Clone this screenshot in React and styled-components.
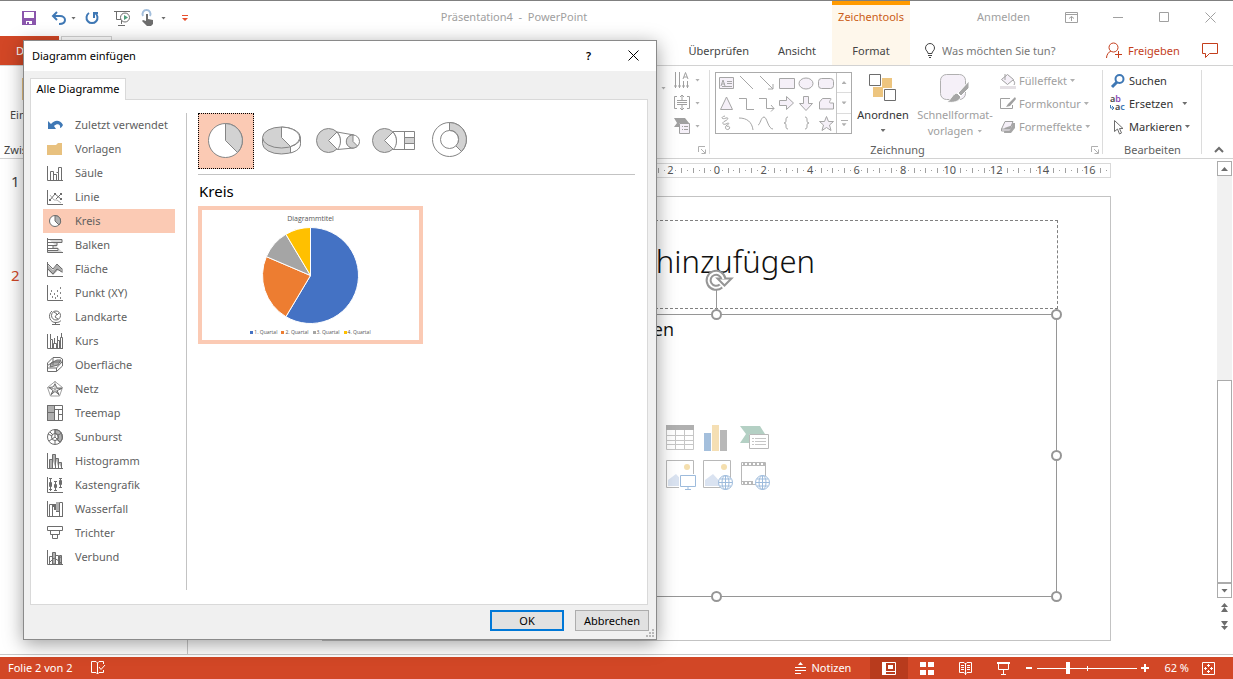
import React, { useState } from 'react'
import styled, { createGlobalStyle } from 'styled-components'

const GlobalStyle = createGlobalStyle`
    * { box-sizing: border-box; }
    body { margin: 0; background: #fff; }
    button, input { font: inherit; color: inherit; }
    button { padding: 0; border: 0; background: none; white-space: nowrap; }
`

const Page = styled.div`
    position: relative;
    display: flex;
    flex-direction: column;
    min-height: 100vh;
    overflow: hidden;
    border-top: 1px solid #808080;
    background: #fff;
    color: #444;
    font: 11px/16px 'Noto Sans', 'Open Sans', sans-serif;
`

const Icon = ({ w = 16, h = w, stroke = '#6d6d6d', fill = 'none', children }) => (
    <svg width={w} height={h} viewBox={`0 0 ${w} ${h}`} stroke={stroke} fill={fill} overflow="visible" aria-hidden="true">
        {children}
    </svg>
)

const Caret = styled.span`
    flex: none;
    width: ${(p) => (p.$big ? 7 : 5)}px;
    height: ${(p) => (p.$big ? 4 : 3)}px;
    background: ${(p) => p.color || '#6d6d6d'};
    clip-path: polygon(0 0, 100% 0, 50% 100%);
    transform: ${(p) => (p.$up ? 'scaleY(-1)' : 'none')};
`

/* ---------- title bar ---------- */

const TitleBar = styled.header`
    display: flex;
    height: 35px;
    color: #a0a0a0;
`

const QuickAccess = styled.div`
    display: flex;
    align-items: center;
    width: 196px;
    padding: 0 0 1px 22px;
    flex: none;
`

const QuickButton = styled.button`
    display: flex;
    align-items: center;
    gap: 5px;
    margin-right: ${(p) => p.$after}px;
`

const DocTitle = styled.div`
    flex: 1;
    text-align: center;
    line-height: 32px;
    white-space: pre;
`

const ContextTitle = styled.div`
    flex: none;
    width: 78px;
    border-top: 4px solid #ff9a00;
    background: #fef7eb;
    color: #cb5d16;
    line-height: 24px;
    text-align: center;
`

const WindowButtons = styled.div`
    display: flex;
    align-items: center;
    justify-content: flex-end;
    gap: 35px;
    flex: none;
    width: 323px;
    padding: 0 17px 3px 0;

    button { display: flex; }
`

/* ---------- tabs ---------- */

const TabBar = styled.nav`
    display: flex;
    height: 30px;
    border-bottom: 1px solid #d2d2d2;
    line-height: 28px;
`

const FileTab = styled.button`
    width: 59px;
    padding-left: 16px;
    background: #d24726;
    color: #fff;
    text-align: left;
`

const OpenTab = styled.button`
    width: 51px;
    margin-left: 2px;
    border: 1px solid #d2d2d2;
    border-bottom: 0;
`

const TabList = styled.div`
    display: flex;
    flex: 1;
    justify-content: flex-end;
    gap: 29px;
    padding-right: 16px;
`

const Tab = styled.button`
    color: #444;
`

const ContextTab = styled.button`
    width: 78px;
    background: #fef7eb;
    color: #444;
`

const TellMe = styled.label`
    display: flex;
    align-items: center;
    gap: 6px;
    width: 196px;
    padding-left: 14px;

    input {
        width: 130px;
        padding: 0;
        border: 0;
        outline: 0;
        background: none;
    }
    input::placeholder { color: #777; opacity: 1; }
`

const ShareArea = styled.div`
    display: flex;
    align-items: center;
    justify-content: space-between;
    width: 127px;
    padding-right: 14px;
    color: #c43e1c;
`

const ShareButton = styled.button`
    display: flex;
    align-items: center;
    gap: 6px;
`

/* ---------- ribbon ---------- */

const Ribbon = styled.section`
    display: flex;
    height: 93px;
    border-bottom: 1px solid #d2d2d2;
`

const Group = styled.div`
    position: relative;
    display: flex;
    flex-direction: column;
    flex: none;
    width: ${(p) => p.$width}px;
    padding-top: 3px;

    &::after {
        content: '';
        position: absolute;
        right: 0;
        top: 4px;
        bottom: 4px;
        border-right: 1px solid #dcdcdc;
    }
`

const GroupBody = styled.div`
    display: flex;
    flex: 1;
    gap: ${(p) => p.$gap || 0}px;
    padding-left: ${(p) => p.$left || 0}px;
`

const GroupFooter = styled.div`
    display: flex;
    align-items: center;
    height: 16px;
    color: #5f5f5f;

    span { flex: 1; text-align: center; }
    span:not(:last-child) { padding-right: 6px; }
    svg { margin-right: 4px; }
`

const Spring = styled.div`
    flex: 1;
`

const PasteGroup = styled.div`
    display: flex;
    flex-direction: column;
    width: 60px;
    padding: 12px 0 0 4px;

    svg { margin-left: 18px; }
    button { padding: 5px 0 19px 6px; text-align: left; }
`

const ToolStack = styled.div`
    display: flex;
    flex-direction: column;
    gap: 7px;
    padding-top: ${(p) => p.$top}px;
`

const IconTool = styled.button`
    display: flex;
    align-items: center;
    gap: 5px;
    height: 16px;
`

const Gallery = styled.div`
    display: flex;
    width: 137px;
    height: 62px;
    margin-top: 3px;
    border: 1px solid #ababab;
`

const ShapeGrid = styled.div`
    display: grid;
    grid-template-columns: repeat(6, 20px);
    grid-auto-rows: 20px;
    flex: 1;

    button { display: flex; }
`

const GalleryScroll = styled.div`
    display: flex;
    flex-direction: column;
    width: 15px;
    border-left: 1px solid #c6c6c6;

    button {
        display: flex;
        flex: 1;
        flex-direction: column;
        align-items: center;
        justify-content: center;
        gap: 2px;
    }
    button + button { border-top: 1px solid #dcdcdc; }
`

const BigButton = styled.button`
    display: flex;
    flex-direction: column;
    align-items: center;
    width: ${(p) => p.$width}px;
    padding-top: 5px;
    color: ${(p) => (p.$off ? '#a0a0a0' : '#333')};

    svg { margin-bottom: 5px; }
    > span + span { margin-top: 6px; }
`

const Line = styled.div`
    display: flex;
    align-items: center;
    gap: 4px;
`

const CommandList = styled.div`
    display: flex;
    flex-direction: column;
    align-items: flex-start;
    padding-left: 4px;
`

const Command = styled.button`
    display: flex;
    align-items: center;
    height: 23px;
    color: ${(p) => (p.$off ? '#a0a0a0' : '#333')};

    svg { margin-right: 3px; }
    ${Caret} { margin-left: ${(p) => p.$gap || 3}px; }
`

const RibbonEnd = styled.div`
    display: flex;
    align-items: flex-end;
    width: 31px;
    padding: 0 0 4px 12px;

    button { display: flex; }
`

/* ---------- workspace ---------- */

const Workspace = styled.main`
    display: flex;
    flex: 1;
    border-bottom: 1px solid #c8c8c8;
    margin-bottom: 2px;
`

const Thumbnails = styled.ol`
    width: 188px;
    margin: 0;
    padding: 12px 0 0 11px;
    border-right: 1px solid #c8c8c8;
    list-style: none;
    font-size: 15px;
    line-height: 20px;

    li { height: 94px; }
    li + li { color: #d24726; }
`

const Stage = styled.div`
    flex: 1;
    min-width: 0;
    padding: 4px 106px 13px 134px;
`

const RulerBar = styled.div`
    display: flex;
    justify-content: center;
    height: 15px;
    margin-bottom: 18px;
    overflow: hidden;
    border: 1px solid #d9d9d9;
    border-left: 0;

    svg { flex: none; }
`

const Slide = styled.article`
    position: relative;
    width: 100%;
    aspect-ratio: 789 / 445;
    border: 1px solid #c3c3c3;
    color: #111;
`

const TitleBox = styled.h1`
    position: absolute;
    top: 23px;
    left: 52px;
    right: 52px;
    height: 89px;
    margin: 0;
    padding-right: 242px;
    border: 1px dashed #808080;
    display: flex;
    justify-content: flex-end;
    font: 300 31px/80px 'Noto Sans', 'Open Sans', sans-serif;
    white-space: nowrap;
`

const BodyBox = styled.div`
    position: absolute;
    top: 117px;
    left: 52px;
    right: 53px;
    bottom: 43px;
    display: grid;
    border: 1px solid #969696;

    > * { grid-area: 1 / 1; }
`

const BodyText = styled.p`
    margin: 0;
    padding-right: 382px;
    text-align: right;
    font: 18px/28px 'Open Sans', sans-serif;
    white-space: nowrap;
`

const InsertGrid = styled.div`
    display: grid;
    grid-template-columns: repeat(3, 30px);
    grid-auto-rows: 30px;
    gap: 5px 7px;
    place-self: center;
    padding: 3px 0 0 3px;

    button { display: flex; }
`

const HandleLayer = styled.div`
    position: absolute;
    inset: -1px 0 0 -1px;
`

const Handle = styled.span`
    position: absolute;
    left: ${(p) => p.$x}%;
    top: ${(p) => p.$y}%;
    width: 11px;
    height: 11px;
    margin: -5px;
    border: 2px solid #969696;
    border-radius: 50%;
    background: #fff;
`

const RotateHandle = styled.span`
    position: absolute;
    left: calc(50% - 12px);
    top: -46px;
    display: flex;
`

const Scroll = styled.div`
    display: flex;
    flex-direction: column;
    align-items: center;
    width: 15px;
    margin: 2px 1px 24px 0;
`

const ScrollButton = styled.button`
    display: flex;
    align-items: center;
    justify-content: center;
    width: 15px;
    height: 15px;
    border: 1px solid #ababab;
`

const ScrollTrack = styled.div`
    display: flex;
    align-items: flex-end;
    flex: 1;
    width: 15px;
    background: #f1f1f1;
`

const ScrollThumb = styled.div`
    width: 15px;
    height: 50%;
    border: 1px solid #ababab;
    background: #fff;
`

const PageStep = styled.button`
    display: flex;
    margin-top: ${(p) => p.$before}px;
`

/* ---------- status bar ---------- */

const StatusBar = styled.footer`
    display: flex;
    align-items: center;
    height: 22px;
    padding: 0 18px 0 8px;
    background: #d24726;
    color: #fff;
`

const StatusButton = styled.button`
    display: flex;
    align-items: center;
    justify-content: center;
    gap: 5px;
    height: 22px;
    min-width: ${(p) => p.$width || 0}px;
    background: ${(p) => (p.$on ? '#b83b1d' : 'none')};
`

const ViewButtons = styled.div`
    display: flex;
    margin: 0 4px 0 19px;
`

const ZoomSlider = styled.input`
    appearance: none;
    width: 100px;
    height: 12px;
    margin: 0 4px;
    background:
        linear-gradient(#fff, #fff) 50px 50% / 1px 5px no-repeat,
        linear-gradient(#fff, #fff) 0 50% / 100% 1px no-repeat;

    &::-webkit-slider-thumb {
        appearance: none;
        width: 4px;
        height: 12px;
        background: #fff;
    }
`

const ZoomValue = styled.span`
    margin: 0 13px 0 15px;
`

/* ---------- dialog ---------- */

const Dialog = styled.section`
    position: absolute;
    left: 23px;
    top: 39px;
    width: 634px;
    border: 1px solid #8a8a8a;
    background: #f0f0f0;
    box-shadow: 0 4px 18px rgba(0, 0, 0, 0.38);
    color: #000;
`

const DialogTitle = styled.div`
    display: flex;
    align-items: center;
    height: 30px;
    padding: 0 17px 1px 8px;
    background: #fff;

    h2 { flex: 1; margin: 0; font: inherit; }
    button { display: flex; margin-left: 37px; font-weight: 600; }
`

const DialogTab = styled.button`
    display: block;
    position: relative;
    z-index: 1;
    width: 96px;
    height: 22px;
    margin: 7px 0 -1px 6px;
    padding-bottom: 2px;
    border: 1px solid #d9d9d9;
    border-bottom: 0;
    background: #fff;
`

const Panel = styled.div`
    display: flex;
    margin: 0 8px 0 6px;
    padding: 13px 12px 14px;
    border: 1px solid #d9d9d9;
    background: #fff;
`

const KindList = styled.ul`
    width: 144px;
    margin: 0;
    padding: 0 11px 21px 0;
    border-right: 1px solid #c3c3c3;
    list-style: none;
`

const Kind = styled.button`
    display: flex;
    align-items: center;
    gap: 12px;
    width: 132px;
    height: 24px;
    padding-left: 4px;
    background: ${(p) => (p.$on ? '#fbcab4' : 'none')};
    color: #5f5f5f;
`

const Detail = styled.div`
    flex: 1;
    padding-left: 11px;

    h3 {
        height: 31px;
        margin: 0;
        padding-left: 1px;
        color: #000;
        font-size: 15px;
        font-weight: 400;
        line-height: 33px;
    }
`

const SubTypes = styled.div`
    display: flex;
    padding-bottom: 5px;
    border-bottom: 1px solid #c3c3c3;
`

const SubType = styled.button`
    display: flex;
    align-items: center;
    justify-content: center;
    width: 56px;
    height: 56px;
    border: 1px dotted ${(p) => (p.$on ? '#000' : 'transparent')};
    background: ${(p) => (p.$on ? '#fbcab4' : 'none')};
`

const Preview = styled.figure`
    display: flex;
    flex-direction: column;
    align-items: center;
    width: 225px;
    height: 138px;
    margin: 0;
    padding-top: 4px;
    border: 4px solid #fbcab4;
    color: #555;
    font: 7px/9px 'Open Sans', sans-serif;

    svg { margin: 4px 0 3px; }
`

const Legend = styled.div`
    display: flex;
    gap: 4px;
    font-size: 5px;
    line-height: 8px;
`

const LegendItem = styled.span`
    display: flex;
    align-items: center;
    gap: 1px;

    &::before {
        content: '';
        width: 3px;
        height: 3px;
        background: ${(p) => p.color};
    }
`

const DialogButtons = styled.div`
    display: flex;
    justify-content: flex-end;
    align-items: flex-start;
    gap: 11px;
    height: 34px;
    padding: 5px 7px 0 0;
`

const DialogButton = styled.button`
    width: 74px;
    height: 21px;
    border: ${(p) => (p.$primary ? '2px solid #0078d7' : '1px solid #adadad')};
    background: #e1e1e1;
`

const Grip = styled.span`
    position: absolute;
    right: 2px;
    bottom: 2px;
    display: flex;
`

/* ---------- drawings ---------- */

const kinds = [
    ['Zuletzt verwendet', <g stroke="none" fill="#3f78b5"><path d="M1 4l3 3C7 3 13 2 16 8c-1 2-2 3-3 3 1-4-3-5-6-2l2 3H1z" /></g>],
    ['Vorlagen', <path d="M0 4h9l2-2h4v12H0z" fill="#e8c17f" stroke="none" />],
    ['Säule', <path d="M.5 1v14.500h15.500M3.500 15V6.500h3V15M6.500 9.500h3V15M9.500 7.500h2V15M11.500 7.500v-5h3V15" />],
    ['Linie', <><path d="M3 6l4 5h3l4 3" stroke="#b0b0b0" /><path d="M.5 1v14.500H16" /><path d="M3 11l5-6 6 5M9 10l5-5" /><path d="M2 11h2M7 5h2M13 10h2M13 5h2" strokeWidth="2" /></>],
    ['Kreis', <><circle cx="8" cy="8" r="5.500" fill="#fff" /><path d="M8 2.500V8l4 4a5.500 5.500 0 0 0-4-9.500z" fill="#b0b0b0" /></>],
    ['Balken', <path d="M.5 1v14.500H16M1 2.500h14v3H1M1 5.500h9v3H1M1 8.500h5v3H1M1 11.500h10v2H1" fill="#d8d8d8" />],
    ['Fläche', <><path d="M1 4l5 5 4-6 6 5v4l-5-3-5 5-5-5z" fill="#b0b0b0" stroke="none" /><path d="M.5 1v14.500H16M1 8l5 5 4-5 5 3M1 3l5 5 4-5 5 5" /></>],
    ['Punkt (XY)', <><path d="M.5 0v15.500H16" /><path d="M4 6h1M7 9h1M10 6h1M13 3h1M5 12h1M10 11h1M13 13h1M8 13h1M3 9h1M13 8h1" strokeWidth="2" stroke="#858585" /></>],
    ['Landkarte', <><circle cx="9" cy="6.500" r="4.500" /><path d="M5 2C0 6 3 14 9 13.500c3 0 4-1 5-2M8.500 13v2M5 15.500h8M7 3l3 2-2 3 3 2M12 4l-2 2" /></>],
    ['Kurs', <path d="M.5 1v14.500H16M3.500 1v5M3.500 15V6.500h2V15M7.500 5v5M6.500 15v-4.500h3V15M10.500 3v5M10.500 15V7.500h2V15M14.500 0v4M13.500 15V4.500h2V15" />],
    ['Oberfläche', <><path d="M4 6l6-3h4l-3 5-8 2z" fill="#b0b0b0" /><path d="M.5 8.500v6h9l6-5.500V2L13 .5H6L.5 6zM.5 8.500L6 5h9.500M9.500 14.500V11L15 5M.5 11h9M6 1v7" /></>],
    ['Netz', <><path d="M8 .5l7.500 6-3 8.500h-9L.5 6.500zM8 8V0M8 8l7.500-1.500M8 8l4.500 7M8 8l-4.500 7M8 8L.5 6.500" stroke="#a0a0a0" /><path d="M8 3l2 4 5 .5-5 2 2 4-4-3-4 3 2-4-4-3 4-.500z" /></>],
    ['Treemap', <><path d="M.5.5h7v7h-7zM.5 7.500h7v8h-7z" fill="#b0b0b0" /><path d="M.5.5h15v15H.5zM7.500.5v15M7.500 4.500h8M11.500 4.500v11M11.500 9.500h4" /></>],
    ['Sunburst', <><path d="M8 .5a7.500 7.500 0 0 1 5 13L10 10.500a3.500 3.500 0 0 0-2-6z" fill="#b0b0b0" /><circle cx="8" cy="8" r="7.500" /><circle cx="8" cy="8" r="3.500" /><path d="M8 0v8l5 5M8 8l-6 4M5 7L1 5M3 3l3 3M8 11v4M11 6l4-2" /></>],
    ['Histogramm', <><path d="M2.500 15V6.500h3V15M5.500 6.500v-5h3V15M8.500 5.500h3V15M11.500 9.500h3V15" fill="#b0b0b0" /><path d="M5.500 2v13M.5 0v15.500H16" /></>],
    ['Kastengrafik', <path d="M.5 0v15.500H16M3.500 1v13M2.500 5.500h2v4h-2zM8.500 4v10M7.500 7.500h2v3h-2zM13.500 1v10M12.500 3.500h2v4h-2zM2 1.500h3M2 12.500h3M7 4.500h3M7 13.500h3M12 1.500h3M12 10.500h3" />],
    ['Wasserfall', <><path d="M9 1h3v9H9z" fill="#b0b0b0" stroke="none" /><path d="M5 3h4v6H7V6H5z" fill="#6d6d6d" stroke="none" /><path d="M.5 0v15.500H16M2.500 15V3.500h3V15M12.500 15V1.500h3V15M9 10.500h3" /></>],
    ['Trichter', <path d="M.5 1.500h15v4H.5zM3.500 5.500h9v4h-9zM5.500 9.500h5v4h-5z" />],
    ['Verbund', <><path d="M5.500 3.500h3V15h-3zM12.500 6.500h2V15h-2z" fill="#b0b0b0" /><path d="M.5 1v14.500H16M2.500 15V7.500h3M8.500 6.500h3V15M11.500 9.500l3-2M3 13l4-4 5 3 3 3" /></>],
]

const subTypes = [
    <Icon w={36} stroke="#858585"><circle cx="17.500" cy="17.500" r="17" fill="#fff" /><path d="M17.500.5v17l12 12a17 17 0 0 0-12-29z" fill="#d2d2d2" /></Icon>,
    <Icon w={40} h={36} stroke="#858585">
        <path d="M.5 14.500v6a19 10.500 0 0 0 38 0v-6" fill="#d2d2d2" />
        <path d="M28.500 23.500v6.500c7-2 10-5 10-9.500v-6z" fill="#fff" />
        <ellipse cx="19.500" cy="14.500" rx="19" ry="10.500" fill="#d2d2d2" />
        <path d="M19.500 4v10.500l9 9A19 10.500 0 0 0 19.500 4z" fill="#fff" />
    </Icon>,
    <Icon w={44} h={26} stroke="#858585">
        <circle cx="12.500" cy="12.500" r="12" fill="#d2d2d2" />
        <path d="M21 4L12.500 12.500l9 9c4-5 4-12-.5-17.500z" fill="#fff" />
        <path d="M21 4l17 3M21.500 21.500l16-1.500" />
        <circle cx="37" cy="13.500" r="6.500" fill="#fff" />
        <path d="M37 7v6.500l4.500 4.500A6.500 6.500 0 1 1 37 7z" fill="#d2d2d2" />
    </Icon>,
    <Icon w={44} h={26} stroke="#858585">
        <circle cx="12.500" cy="12.500" r="12" fill="#d2d2d2" />
        <path d="M21 4L12.500 12.500l9 9c4-5 4-12-.5-17.500z" fill="#fff" />
        <path d="M21 3.500h21.500v18H21M32.500 3.500v18" />
        <path d="M32.500 9.500h10v6h-10z" fill="#d2d2d2" />
    </Icon>,
    <Icon w={36} stroke="#858585">
        <circle cx="17.500" cy="16.500" r="17" />
        <path d="M17.500-.5a17 17 0 0 1 12 29l-6-6a8.500 8.500 0 0 0-6-15z" fill="#d2d2d2" />
        <circle cx="17.500" cy="16.500" r="9" fill="#fff" />
    </Icon>,
]

const shapes = [
    ['Textfeld', <><path d="M3.500 4.500h14v11h-14z" /><path d="M5 13l2-6 2 6M6 11h3M11 8.500h5M11 10.500h5M6 13.500h10" /></>],
    ['Linie', <path d="M4 3l13 13" />],
    ['Pfeil', <path d="M4 3l13 13M17 11v5h-5" fill="none" />],
    ['Rechteck', <path d="M3.500 5.500h15v10h-15z" />],
    ['Ellipse', <ellipse cx="10" cy="10.500" rx="7" ry="5.500" />],
    ['Abgerundetes Rechteck', <rect x="2.500" y="5.500" width="15" height="10" rx="3" />],
    ['Dreieck', <path d="M10.500 4l6 12.500h-12z" />],
    ['Winkel', <path d="M3 5.500h7.500v11H18" fill="none" />],
    ['Winkelpfeil', <path d="M3 5.500h7.500v10H18M15 12l3 3.500-3 3" fill="none" />],
    ['Pfeil rechts', <path d="M3.500 7.500h7v-4l7 6.500-7 6.500v-4h-7z" />],
    ['Pfeil unten', <path d="M7.500 3.500h5v7h4l-6.500 7-6.500-7h4z" />],
    ['Freihandform', <path d="M6.500 5.500h8c2 0-3 4 0 4.500h3v6h-14V9z" />],
    ['Skizze', <path d="M9 3C4 4 6 7 10 5c3-1 2 2-1 3-4 2-2 4 1 3 3-2 4 0 1 1-3 2-1 6 2 4 2-2-1-4-2-2" fill="none" />],
    ['Bogen', <path d="M3 5c8 0 13 4 14 12" fill="none" />],
    ['Kurve', <path d="M2 12c2 0 3-8 6-8s4 12 9 12" fill="none" />],
    ['Klammer auf', <path d="M12 4c-4 0 0 6-4 6 4 0 0 6 4 6" fill="none" />],
    ['Klammer zu', <path d="M9 4c4 0 0 6 4 6-4 0 0 6-4 6" fill="none" />],
    ['Stern', <path d="M10.500 3.500l2 5h5l-4 3.500 1.500 5.500-4.500-3-4.500 3 1.500-5.500-4-3.500h5z" />],
]

const quarters = [
    { label: '1. Quartal', value: 8.2, color: '#4472c4' },
    { label: '2. Quartal', value: 3.2, color: '#ed7d31' },
    { label: '3. Quartal', value: 1.4, color: '#a5a5a5' },
    { label: '4. Quartal', value: 1.2, color: '#ffc000' },
]

const Pie = () => {
    const total = quarters.reduce((sum, q) => sum + q.value, 0)
    const point = (v) => {
        const a = (v / total) * 2 * Math.PI
        return `${48.5 + 48 * Math.sin(a)} ${48.5 - 48 * Math.cos(a)}`
    }
    let start = 0
    return (
        <Icon w={97} h={98} stroke="#fff">
            {quarters.map((q) => {
                const end = start + q.value
                const d = `M48.5 48.5L${point(start)}A48 48 0 ${q.value > total / 2 ? 1 : 0} 1 ${point(end)}z`
                start = end
                return <path key={q.label} d={d} fill={q.color} />
            })}
        </Icon>
    )
}

const CM = 788 / 33.867

const Ruler = () => {
    const marks = []
    for (let k = -67; k <= 67; k++) {
        const x = 395 + (k * CM) / 4
        if (k % 8 === 0) {
            marks.push(<text key={k} x={x} y="10" textAnchor="middle" fontSize="11" fill="#555">{Math.abs(k / 4)}</text>)
        } else {
            const r = k % 2 ? 0.5 : 2.5
            marks.push(<path key={k} d={`M${Math.round(x) - 0.5} ${6.500 - r}v${r * 2}`} stroke="#a0a0a0" />)
        }
    }
    return <svg width="789" height="13" aria-hidden="true">{marks}</svg>
}

const Globe = () => (
    <g stroke="#9dbbdc" fill="#fff">
        <circle cx="22.500" cy="22.500" r="7" />
        <ellipse cx="22.500" cy="22.500" rx="3.500" ry="7" />
        <path d="M22.500 15.500v14M15.500 22.500h14M17 19h11M17 26h11" />
    </g>
)

const Picture = () => (
    <>
        <path d="M.5.5h27v27H.5z" fill="#fff" />
        <path d="M2 26v-6l8-6 11 12z" fill="#dae3f1" stroke="none" />
        <circle cx="21" cy="7" r="3" fill="#f5dfae" stroke="none" />
    </>
)

const inserts = [
    ['Tabelle', <><path d="M.5.5h27v24H.5zM.5 10.500h27M.5 15.500h27M.5 19.500h27M9.500 5v19M18.500 5v19" stroke="#c6c6c6" /><path d="M0 0h28v5H0z" fill="#b0b0b0" stroke="none" /></>],
    ['Diagramm', <g stroke="none"><path d="M1 8h7v18H1z" fill="#a4bfdc" /><path d="M9 0h7v26H9z" fill="#f5dfb4" /><path d="M17 5h7v21h-7z" fill="#b8b8b8" /></g>],
    ['SmartArt', <><path d="M0 1h20l5 8h-16v9H0l6-9z" fill="#b4d0c4" stroke="none" /><path d="M9.500 9.500h19v14h-19z" fill="#fff" /><path d="M12 13.500h2M15 13.500h11M12 16.500h2M15 16.500h11M12 19.500h2M15 19.500h11" stroke="#c6c6c6" /></>],
    ['Bild', <><Picture /><path d="M13 14h17v16H13z" fill="#fff" stroke="none" /><path d="M14.500 15.500h15v11h-15zM22 27v2M19 29.500h6" stroke="#9dbbdc" /></>],
    ['Onlinebild', <><Picture /><Globe /></>],
    ['Video', <><path d="M1.500 2.500h24v22h-24zM1 5.500h24M1 21.500h12" /><path d="M3 4h22M3 23h12" strokeDasharray="2 2" strokeWidth="2" /><Globe /></>],
]

const Launcher = () => (
    <Icon w={8} stroke="#b0b0b0"><path d="M.5 6V.5H7M3 3l4 4M7.500 3.500v4h-4" /></Icon>
)

const ChartDialog = () => {
    const [kind, setKind] = useState('Kreis')
    const [sub, setSub] = useState(0)

    return (
        <Dialog role="dialog" aria-label="Diagramm einfügen">
            <DialogTitle>
                <h2>Diagramm einfügen</h2>
                <button type="button">?</button>
                <button type="button" aria-label="Schließen">
                    <Icon w={11} stroke="#000"><path d="M.5.5l10 10M10.500.5l-10 10" /></Icon>
                </button>
            </DialogTitle>
            <DialogTab type="button">Alle Diagramme</DialogTab>
            <Panel>
                <KindList>
                    {kinds.map(([name, art]) => (
                        <li key={name}>
                            <Kind type="button" $on={name === kind} onClick={() => setKind(name)}>
                                <Icon>{art}</Icon>
                                {name}
                            </Kind>
                        </li>
                    ))}
                </KindList>
                <Detail>
                    <SubTypes>
                        {subTypes.map((art, i) => (
                            <SubType key={i} type="button" aria-label={`Untertyp ${i + 1}`} $on={i === sub} onClick={() => setSub(i)}>
                                {art}
                            </SubType>
                        ))}
                    </SubTypes>
                    <h3>{kind}</h3>
                    <Preview>
                        <span>Diagrammtitel</span>
                        <Pie />
                        <Legend>
                            {quarters.map((q) => (
                                <LegendItem key={q.label} color={q.color}>{q.label}</LegendItem>
                            ))}
                        </Legend>
                    </Preview>
                </Detail>
            </Panel>
            <DialogButtons>
                <DialogButton type="button" $primary>OK</DialogButton>
                <DialogButton type="button">Abbrechen</DialogButton>
            </DialogButtons>
            <Grip>
                <Icon w={8} fill="#b8b8b8" stroke="none">
                    <path d="M6 0h2v2H6zM3 3h2v2H3zM6 3h2v2H6zM0 6h2v2H0zM3 6h2v2H3zM6 6h2v2H6z" />
                </Icon>
            </Grip>
        </Dialog>
    )
}

const Header = () => (
    <>
        <TitleBar>
            <QuickAccess>
                <QuickButton $after={15} aria-label="Speichern">
                    <Icon w={14} stroke="none" fill="#8a56ac"><path d="M0 0h14v14H0z" /><path d="M2 1h10v6H2zM4 10h6v3H4z" fill="#fff" /><path d="M5 11h2v3H5z" /></Icon>
                </QuickButton>
                <QuickButton $after={9} aria-label="Rückgängig">
                    <Icon w={15} stroke="#3f78b5"><path d="M2 5h7c3 0 5 2 5 4s-2 4-6 4M6 1L2 5l4 4" strokeWidth="2" /></Icon>
                    <Caret />
                </QuickButton>
                <QuickButton $after={15} aria-label="Wiederholen">
                    <Icon w={14} stroke="#3f78b5"><path d="M4 2a5.500 5.500 0 1 0 6 0M9 7V2h4" strokeWidth="2" /></Icon>
                </QuickButton>
                <QuickButton $after={10} aria-label="Präsentation starten">
                    <Icon w={17}><path d="M0 1.500h16M2.500 2v7.500h5M7.500 10v4M4 15.500h7" /><circle cx="11" cy="7.500" r="4.500" fill="#fff" /><path d="M10 5l4 2.500-4 2.500z" fill="#4f9d7b" stroke="none" /></Icon>
                </QuickButton>
                <QuickButton $after={16} aria-label="Touchmodus">
                    <Icon w={15} h={16}><path d="M2 6a4 4 0 1 1 7 0" stroke="#a4bfdc" strokeWidth="2" /><path d="M5 4h2v5l5 1v4l-2 2H6l-5-5 1-1 3 1z" fill="#6d6d6d" stroke="none" /></Icon>
                    <Caret />
                </QuickButton>
                <QuickButton $after={0} aria-label="Anpassen">
                    <Icon w={6} h={7} fill="#e8502d" stroke="none"><path d="M0 0h6v1H0zM0 3h6L3 6z" /></Icon>
                </QuickButton>
            </QuickAccess>
            <DocTitle>{'Präsentation4  -  PowerPoint'}</DocTitle>
            <ContextTitle>Zeichentools</ContextTitle>
            <WindowButtons>
                <button>Anmelden</button>
                <button aria-label="Menübandoptionen"><Icon w={13} h={11} stroke="#a0a0a0"><path d="M.5.5h12v10H.5zM.5 2.500h12M6.500 9V4.500M4 6.500l2.500-2 2.500 2" /></Icon></button>
                <button aria-label="Minimieren"><Icon w={11} stroke="#a0a0a0"><path d="M0 5.500h10" /></Icon></button>
                <button aria-label="Maximieren"><Icon w={11} stroke="#a0a0a0"><path d="M.5.5h9v9h-9z" /></Icon></button>
                <button aria-label="Schließen"><Icon w={11} stroke="#a0a0a0"><path d="M.5.5l10 10M10.500.5l-10 10" /></Icon></button>
            </WindowButtons>
        </TitleBar>
        <TabBar>
            <FileTab>Datei</FileTab>
            <OpenTab aria-label="Start" />
            <TabList>
                <Tab>Überprüfen</Tab>
                <Tab>Ansicht</Tab>
            </TabList>
            <ContextTab>Format</ContextTab>
            <TellMe>
                <Icon w={12} h={15} stroke="#444"><path d="M4 10.500C4 8 1.500 8 1.500 5a4.500 4.500 0 0 1 9 0C10.500 8 8 8 8 10.500zM4 12.500h4M5 14.500h2" /></Icon>
                <input type="text" aria-label="Was möchten Sie tun?" placeholder="Was möchten Sie tun?" />
            </TellMe>
            <ShareArea>
                <ShareButton>
                    <Icon w={16} h={17} stroke="#c43e1c"><circle cx="7.500" cy="5.500" r="4.500" /><path d="M.5 16c0-3 2-6 4.500-7M12.500 9v7M9 12.500h7" /></Icon>
                    Freigeben
                </ShareButton>
                <ShareButton aria-label="Kommentare">
                    <Icon w={17} h={15} stroke="#c43e1c"><path d="M.5.5h15v10h-8l-4 4v-4h-3z" /></Icon>
                </ShareButton>
            </ShareArea>
        </TabBar>
    </>
)

const RibbonBar = () => (
    <Ribbon>
        <PasteGroup>
            <Icon w={20} h={24} fill="#e8c17f" stroke="none"><path d="M0 0h20v22H0z" /></Icon>
            <button>Einfügen</button>
            <span>Zwischenablage</span>
        </PasteGroup>
        <Spring />
        <Group $width={54}>
            <GroupBody $left={5} $gap={8}>
                <ToolStack $top={11}>
                    <IconTool aria-label="Spalten"><Caret color="#b0b0b0" /></IconTool>
                </ToolStack>
                <ToolStack $top={3}>
                    <IconTool aria-label="Textrichtung">
                        <Icon stroke="#a0a0a0"><path d="M1.500 0v16M5.500 0v16M9.500 9v7M13.500 9v7M9 7l2.500-6.500L14 7M10 5h3M0 14h3M4 14h3M8 14h3M12 14h3" /></Icon>
                        <Caret color="#b0b0b0" />
                    </IconTool>
                    <IconTool aria-label="Text ausrichten">
                        <Icon stroke="#a0a0a0"><path d="M3 1.500H.5v12H3M13 1.500h2.500v12H13M3 5.500h10M3 7.500h10M3 9.500h10M8 0v5M6 2l2-2 2 2M8 10v5M6 13l2 2 2-2" /></Icon>
                        <Caret color="#b0b0b0" />
                    </IconTool>
                    <IconTool aria-label="SmartArt">
                        <Icon stroke="#a0a0a0"><path d="M0 0h11l4 5H5v4H0l3-4z" fill="#a0a0a0" stroke="none" /><path d="M5.500 5.500h10v10h-10zM8 8.500h1M10 8.500h4M8 11.500h1M10 11.500h4" fill="#f5f0f8" /></Icon>
                        <Caret color="#b0b0b0" />
                    </IconTool>
                </ToolStack>
            </GroupBody>
            <GroupFooter><Spring /><Launcher /></GroupFooter>
        </Group>
        <Group $width={393}>
            <GroupBody $left={5}>
                <Gallery>
                    <ShapeGrid>
                        {shapes.map(([name, art]) => (
                            <button key={name} aria-label={name}>
                                <Icon w={20} stroke="#a6a6a6" fill="#f5f0f8">{art}</Icon>
                            </button>
                        ))}
                    </ShapeGrid>
                    <GalleryScroll>
                        <button aria-label="Nach oben"><Caret $up color="#b0b0b0" /></button>
                        <button aria-label="Nach unten"><Caret color="#b0b0b0" /></button>
                        <button aria-label="Weitere"><Icon w={7} h={1} stroke="#b0b0b0"><path d="M0 .5h7" /></Icon><Caret color="#b0b0b0" /></button>
                    </GalleryScroll>
                </Gallery>
                <BigButton $width={62}>
                    <Icon w={28} h={28} stroke="#6d6d6d"><path d="M13 4h10v10H13zM4 13h10v10H4z" fill="#edc57f" stroke="none" /><path d="M.5.5h11v11H.5zM15.500 15.500h11v11h-11z" fill="#fff" /></Icon>
                    <span>Anordnen</span>
                    <Caret />
                </BigButton>
                <BigButton $width={82} $off>
                    <Icon w={30} h={28} stroke="#b0b0b0"><rect x=".5" y=".5" width="25" height="25" rx="6" fill="#f5f0f8" /><path d="M29 7v7l-8 8-3-3zM17 19l4 4c-2 5-8 6-14 5 4-2 5-8 10-9z" fill="#a6a6a6" stroke="#fff" /></Icon>
                    <Line>Schnellformat-</Line>
                    <Line>vorlagen <Caret color="#b0b0b0" /></Line>
                </BigButton>
                <CommandList>
                    <Command $off>
                        <Icon stroke="#a0a0a0"><path d="M1.500 6.500l6-5 6 5-6 5zM5 7V1M13 7c2 2 2 3 1 5" fill="#f5f0f8" /><path d="M0 13h16v3H0z" fill="#e4e0e4" stroke="none" /></Icon>
                        Fülleffekt <Caret color="#b0b0b0" />
                    </Command>
                    <Command $off>
                        <Icon stroke="#a0a0a0"><path d="M10 2.500H.5v10h12V9" /><path d="M15 1l-7 7-2 3 4-1 6-7z" fill="#a0a0a0" stroke="none" /></Icon>
                        Formkontur <Caret color="#b0b0b0" />
                    </Command>
                    <Command $off>
                        <Icon stroke="#a0a0a0"><path d="M5 4h10v5l-4 5H4z" fill="#a6a6a6" stroke="none" /><path d="M5 2.500h8l-3 7.500H1.500zM1.500 10v2H10l3-6" fill="#f5f0f8" /></Icon>
                        Formeffekte <Caret color="#b0b0b0" />
                    </Command>
                </CommandList>
            </GroupBody>
            <GroupFooter><span>Zeichnung</span><Launcher /></GroupFooter>
        </Group>
        <Group $width={99}>
            <GroupBody $left={3}>
                <CommandList>
                    <Command>
                        <Icon stroke="#3f78b5"><circle cx="9.500" cy="6" r="4" strokeWidth="2" /><path d="M7 9l-5 5" strokeWidth="3" /></Icon>
                        Suchen
                    </Command>
                    <Command $gap={9}>
                        <Icon stroke="none" fill="#444" >
                            <text x="0" y="6" fontSize="9" fontWeight="600">a<tspan fill="#8a4bb5">b</tspan></text>
                            <text x="5" y="14" fontSize="9" fontWeight="600">a<tspan fill="#3f78b5">c</tspan></text>
                            <path d="M.5 9v3H4M2 10l2 2-2 2" stroke="#3f78b5" fill="none" />
                        </Icon>
                        Ersetzen <Caret />
                    </Command>
                    <Command>
                        <Icon stroke="#6d6d6d"><path d="M4.500 1.500v11l3-2.500 2 5 2-1-2-4.500h3.500z" fill="#fff" /></Icon>
                        Markieren <Caret />
                    </Command>
                </CommandList>
            </GroupBody>
            <GroupFooter><span>Bearbeiten</span></GroupFooter>
        </Group>
        <RibbonEnd>
            <button aria-label="Menüband reduzieren"><Icon w={10} h={8}><path d="M1 6l4-4 4 4" strokeWidth="2" /></Icon></button>
        </RibbonEnd>
    </Ribbon>
)

const Editor = () => (
    <Workspace>
        <Thumbnails>
            <li>1</li>
            <li>2</li>
        </Thumbnails>
        <Stage>
            <RulerBar><Ruler /></RulerBar>
            <Slide>
                <TitleBox>Titel durch Klicken hinzufügen</TitleBox>
                <BodyBox>
                    <BodyText>Text durch Klicken hinzufügen</BodyText>
                    <InsertGrid>
                        {inserts.map(([name, art]) => (
                            <button key={name} aria-label={name}>
                                <Icon w={30} stroke="#b8b8b8">{art}</Icon>
                            </button>
                        ))}
                    </InsertGrid>
                    <HandleLayer>
                        <RotateHandle>
                            <Icon w={28} h={46} stroke="#969696">
                                <path d="M12.500 22v20" />
                                <path d="M17 18a7.500 7.500 0 1 1 2.500-7" strokeWidth="6" />
                                <path d="M13.500 10.500h14l-7 7z" fill="#fff" strokeWidth="2" />
                                <path d="M17 18a7.500 7.500 0 1 1 2.500-7" stroke="#fff" strokeWidth="2" />
                            </Icon>
                        </RotateHandle>
                        <Handle $x={50} $y={0} />
                        <Handle $x={100} $y={0} />
                        <Handle $x={100} $y={50} />
                        <Handle $x={100} $y={100} />
                        <Handle $x={50} $y={100} />
                    </HandleLayer>
                </BodyBox>
            </Slide>
        </Stage>
        <Scroll>
            <ScrollButton aria-label="Nach oben"><Caret $big $up /></ScrollButton>
            <ScrollTrack><ScrollThumb /></ScrollTrack>
            <ScrollButton aria-label="Nach unten"><Caret $big /></ScrollButton>
            <PageStep $before={5} aria-label="Vorherige Folie">
                <Icon w={7} h={9} fill="#6d6d6d" stroke="none"><path d="M3.500 0L7 4H0zM3.500 4L7 9H0z" /></Icon>
            </PageStep>
            <PageStep $before={9} aria-label="Nächste Folie">
                <Icon w={7} h={9} fill="#6d6d6d" stroke="none"><path d="M3.500 9L7 5H0zM3.500 5L7 0H0z" /></Icon>
            </PageStep>
        </Scroll>
    </Workspace>
)

const Status = () => {
    const [zoom, setZoom] = useState(30)

    return (
        <StatusBar>
            <span>Folie 2 von 2</span>
            <Spring>
                <StatusButton $width={52} aria-label="Rechtschreibung">
                    <Icon w={15} h={14} stroke="#fff"><path d="M6.500 2L5 .5H.5v11H5l1.500 1.500L8 11.500h4.500V9M6.500 2v11M6.500 2L8 .5h4.500V3M8 6l2 2.500L14 4" /></Icon>
                </StatusButton>
            </Spring>
            <StatusButton>
                <Icon w={11} h={12} stroke="#fff"><path d="M0 5.500h11M0 8.500h11M0 11.500h6" /><path d="M5.500 0L8 3H3z" fill="#fff" stroke="none" /></Icon>
                Notizen
            </StatusButton>
            <ViewButtons>
                <StatusButton $width={38} $on aria-label="Normal">
                    <Icon w={14} h={13} stroke="#fff"><path d="M.5.5h13v12H.5zM4 9.500h9" /><path d="M0 0h4v13H0zM6 3h5v4H6z" fill="#fff" stroke="none" /></Icon>
                </StatusButton>
                <StatusButton $width={38} aria-label="Foliensortierung">
                    <Icon w={14} h={13} fill="#fff" stroke="none"><path d="M0 0h6v5H0zM8 0h6v5H8zM0 8h6v5H0zM8 8h6v5H8z" /></Icon>
                </StatusButton>
                <StatusButton $width={38} aria-label="Leseansicht">
                    <Icon w={13} h={13} stroke="#fff"><path d="M6.500 2L5 .5H.5v10H5L6.500 12 8 10.500h4.500V.5H8zM6.500 1v12M2 3.500h3M2 5.500h3M2 7.500h3M8 3.500h3M8 5.500h3M8 7.500h3" /></Icon>
                </StatusButton>
                <StatusButton $width={38} aria-label="Bildschirmpräsentation">
                    <Icon w={13} h={13} stroke="#fff"><path d="M0 1h13" strokeWidth="2" /><path d="M1.500 2v5.500h10V2M6.500 8v4M4 12.500h5" /></Icon>
                </StatusButton>
            </ViewButtons>
            <StatusButton aria-label="Verkleinern"><Icon w={7} h={9} stroke="#fff"><path d="M0 4h6" strokeWidth="2" /></Icon></StatusButton>
            <ZoomSlider type="range" aria-label="Zoom" value={zoom} onChange={(e) => setZoom(e.target.value)} />
            <StatusButton aria-label="Vergrößern"><Icon w={8} stroke="#fff"><path d="M0 4h8M4 0v8" strokeWidth="2" /></Icon></StatusButton>
            <ZoomValue>62 %</ZoomValue>
            <StatusButton aria-label="An Fenster anpassen">
                <Icon w={13} stroke="#fff"><path d="M.5.5h12v12H.5zM6.500 2v3M5 3.500h3M6.500 8v3M5 9.500h3M2 6.500h3M3.500 5v3M8 6.500h3M9.500 5v3" /></Icon>
            </StatusButton>
        </StatusBar>
    )
}

const App = () => (
    <Page>
        <GlobalStyle />
        <Header />
        <RibbonBar />
        <Editor />
        <Status />
        <ChartDialog />
    </Page>
)

export default App
